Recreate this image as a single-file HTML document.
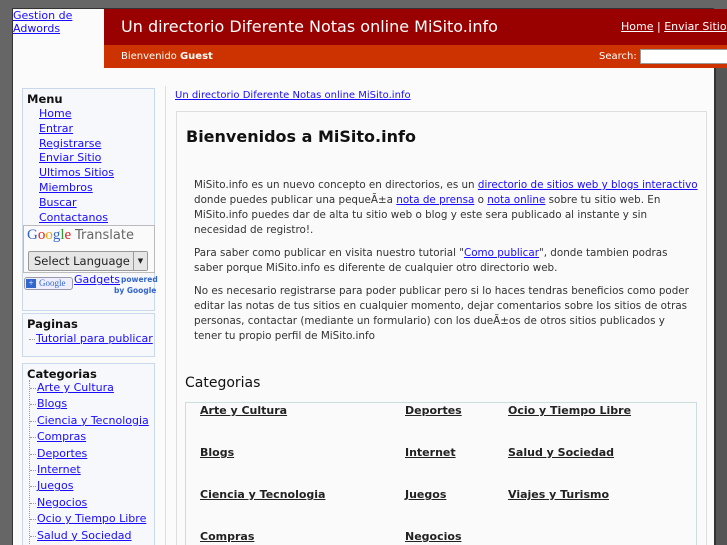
<!DOCTYPE html>
<html><head><meta charset="utf-8"><style>
*{margin:0;padding:0;box-sizing:border-box}
html,body{width:727px;height:545px;overflow:hidden}
body{background:#666;font-family:"DejaVu Sans","Liberation Sans",sans-serif;font-size:11px;color:#333;position:relative}
a{color:#1a0dff}
.abs{position:absolute}
#page{left:12px;top:8px;width:702px;height:537px;background:#fbfbfc;border-left:1px solid #333;border-top:1px solid #333}
#rstrip{left:714px;top:68px;width:13px;height:477px;background:#555;border-left:2px solid #333}
#red{left:104px;top:9px;width:623px;height:36px;background:#990000;color:#fff}
#org{left:104px;top:45px;width:623px;height:23px;background:#cc3300;color:#fff;font-size:10px}
.side{left:22px;width:133px;background:#f7f8fb;border:1px solid #c9d8ea}
.side h4{font-size:11.5px;color:#111;margin:0 0 0 4px}
.side a{display:block;line-height:14.8px;font-size:11px;white-space:nowrap}
.tree a{line-height:16.4px;margin-left:7px;position:relative}
.tree a:before{content:"";position:absolute;left:-7px;top:8px;width:6px;border-top:1px dotted #999}
.tree{border-left:1px dotted #999;margin-left:6px}
.txt p{white-space:nowrap}
</style></head><body>
<div id="page" class="abs"></div>
<div id="rstrip" class="abs"></div>
<div class="abs" style="left:13px;top:9px;font-size:11px;line-height:13px"><a href="#">Gestion de<br>Adwords</a></div>
<div id="red" class="abs"><div class="abs" style="left:17px;top:8px;font-size:16px">Un directorio Diferente Notas online MiSito.info</div>
<div class="abs" style="left:517px;top:11px;font-size:11px;white-space:nowrap"><a href="#" style="color:#fff">Home</a> | <a href="#" style="color:#fff">Enviar Sitio</a> |</div></div>
<div id="org" class="abs"><div class="abs" style="left:17px;top:6px">Bienvenido <b>Guest</b></div>
<div class="abs" style="left:495px;top:6px">Search:</div>
<div class="abs" style="left:536px;top:4px;width:100px;height:15px;background:#fff;border:1px solid #999"></div></div>
<div class="abs" style="left:165px;top:86px;width:1px;height:459px;background:#ddd"></div>

<div class="abs side" style="top:88px;height:223px;padding-top:3px">
<h4>Menu</h4>
<div style="margin-left:16px;margin-top:1px"><a href="#">Home</a><a href="#">Entrar</a><a href="#">Registrarse</a><a href="#">Enviar Sitio</a><a href="#">Ultimos Sitios</a><a href="#">Miembros</a><a href="#">Buscar</a><a href="#">Contactanos</a></div>
<div style="margin-top:0;width:132px;height:48px;background:#fafafa;border:1px solid #bbb;position:relative">
<div class="abs" style="left:3px;top:1px;font-size:15px;font-family:'Liberation Serif',serif"><span style="color:#36c">G</span><span style="color:#d22">o</span><span style="color:#ea0">o</span><span style="color:#36c">g</span><span style="color:#393">l</span><span style="color:#d22">e</span> <span style="color:#666;font-family:'DejaVu Sans',sans-serif;font-size:13px">Translate</span></div>
<div class="abs" style="left:4px;top:25px;width:120px;height:20px;background:#e6e6e6;border:1px solid #999;border-radius:2px;font-size:11.5px;color:#222;padding:2px 5px;white-space:nowrap">Select Language<span class="abs" style="right:0;top:0;width:14px;height:18px;border-left:1px solid #999;font-size:7px;text-align:center;line-height:18px;background:#e6e6e6">▼</span></div></div>
<div style="position:relative;height:28px"><div class="abs" style="left:1px;top:4px;width:49px;height:13px;border:1px solid #99a;border-radius:3px;background:#eef;font-size:9px;color:#36c;font-family:'Liberation Serif',serif;padding-left:14px">Google<span class="abs" style="left:1px;top:1px;width:10px;height:9px;background:#36c;color:#fff;font-size:9px;line-height:9px;text-align:center">+</span></div>
<a href="#" class="abs" style="left:51px;top:0;display:inline">Gadgets</a><span class="abs" style="left:98px;top:2px;font-size:7.5px;color:#36c;font-weight:bold;white-space:nowrap">powered</span><span class="abs" style="left:91px;top:13px;font-size:7.5px;color:#36c;font-weight:bold;white-space:nowrap">by Google</span></div>
</div>
<div class="abs side" style="top:313px;height:44px;padding-top:3px"><h4>Paginas</h4><div class="tree" style="border-left:none"><a href="#" style="margin-left:7px">Tutorial para publicar</a></div></div>
<div class="abs side" style="top:363px;height:190px;padding-top:3px"><h4>Categorias</h4>
<div class="tree" style="margin-top:-1px"><a href="#">Arte y Cultura</a><a href="#">Blogs</a><a href="#">Ciencia y Tecnologia</a><a href="#">Compras</a><a href="#">Deportes</a><a href="#">Internet</a><a href="#">Juegos</a><a href="#">Negocios</a><a href="#">Ocio y Tiempo Libre</a><a href="#">Salud y Sociedad</a></div></div>

<div class="abs" style="left:175px;top:90px;font-size:10px"><a href="#">Un directorio Diferente Notas online MiSito.info</a></div>
<div class="abs" style="left:176px;top:111px;width:531px;height:440px;border:1px solid #ddd;background:#fafafa"></div>
<div class="abs" style="left:186px;top:127px;font-size:16px;font-weight:bold;color:#111">Bienvenidos a MiSito.info</div>
<div class="abs txt" style="left:194px;top:178px;width:506px;line-height:15px;font-size:10.35px">
<p>MiSito.info es un nuevo concepto en directorios, es un <a href="#">directorio de sitios web y blogs interactivo</a><br>donde puedes publicar una pequeÃ±a <a href="#">nota de prensa</a> o <a href="#">nota online</a> sobre tu sitio web. En<br>MiSito.info puedes dar de alta tu sitio web o blog y este sera publicado al instante y sin<br>necesidad de registro!.</p>
<p style="margin-top:8px">Para saber como publicar en visita nuestro tutorial "<a href="#">Como publicar</a>", donde tambien podras<br>saber porque MiSito.info es diferente de cualquier otro directorio web.</p>
<p style="margin-top:8px">No es necesario registrarse para poder publicar pero si lo haces tendras beneficios como poder<br>editar las notas de tus sitios en cualquier momento, dejar comentarios sobre los sitios de otras<br>personas, contactar (mediante un formulario) con los dueÃ±os de otros sitios publicados y<br>tener tu propio perfil de MiSito.info</p></div>
<div class="abs" style="left:185px;top:375px;font-size:14px;color:#111">Categorias</div>
<div class="abs" style="left:185px;top:402px;width:512px;height:150px;border:1px solid #cdd;background:#fafafa;font-weight:bold;font-size:11px;overflow:hidden">
<div class="abs" style="left:14px;top:-13px;line-height:42px"><a href="#" style="color:#222">Arte y Cultura</a><br><a href="#" style="color:#222">Blogs</a><br><a href="#" style="color:#222">Ciencia y Tecnologia</a><br><a href="#" style="color:#222">Compras</a></div>
<div class="abs" style="left:219px;top:-13px;line-height:42px"><a href="#" style="color:#222">Deportes</a><br><a href="#" style="color:#222">Internet</a><br><a href="#" style="color:#222">Juegos</a><br><a href="#" style="color:#222">Negocios</a></div>
<div class="abs" style="left:322px;top:-13px;line-height:42px"><a href="#" style="color:#222">Ocio y Tiempo Libre</a><br><a href="#" style="color:#222">Salud y Sociedad</a><br><a href="#" style="color:#222">Viajes y Turismo</a></div>
</div>
</body></html>
